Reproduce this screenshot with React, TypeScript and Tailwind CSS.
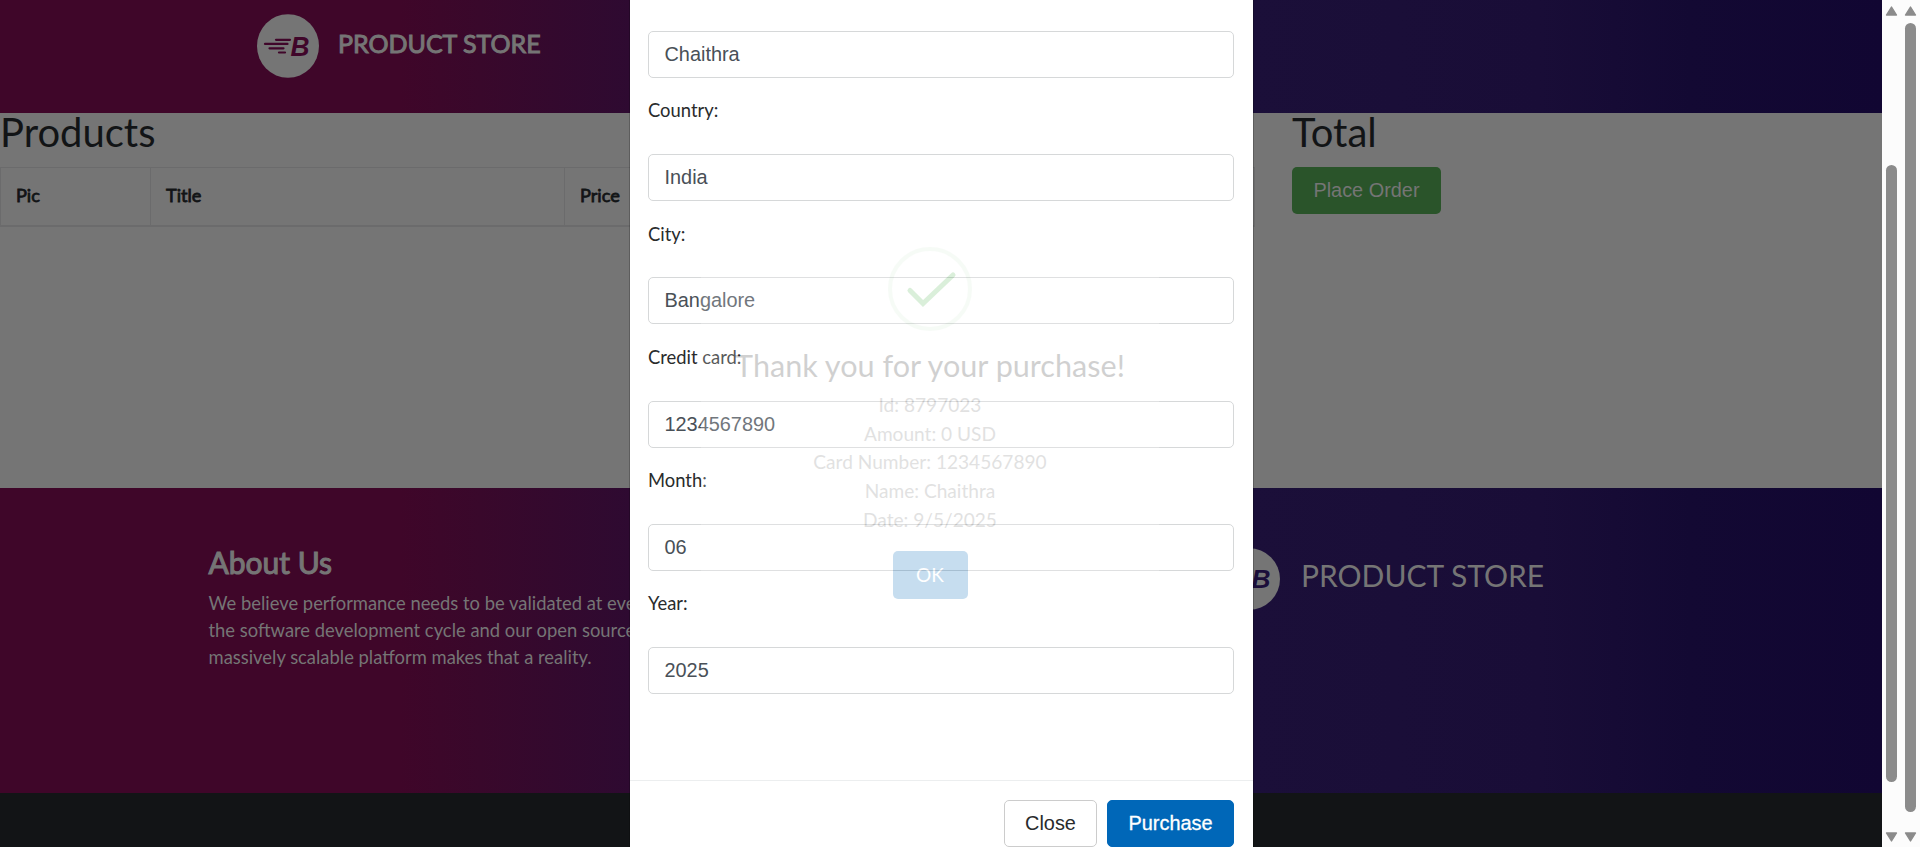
import React from "react";

const LATO = "font-['Lato','Liberation_Sans',sans-serif]";
const ARIAL = "font-['Liberation_Sans',Arial,sans-serif]";

const fields = [
  { label: "Country:", value: "India", box: "h-[76px] pt-[17px]" },
  { label: "City:", value: "Bangalore", box: "h-[76px] pt-[18px]" },
  { label: "Credit card:", value: "1234567890", box: "h-[77px] pt-[18px]" },
  { label: "Month:", value: "06", box: "h-[76px] pt-[17px]" },
  { label: "Year:", value: "2025", box: "h-[76px] pt-[17px]" },
];

const receipt = [
  "Id: 8797023",
  "Amount: 0 USD",
  "Card Number: 1234567890",
  "Name: Chaithra",
  "Date: 9/5/2025",
];

function Logo({ ink, className }: { ink: string; className: string }) {
  return (
    <svg viewBox="0 0 62 64" preserveAspectRatio="none" className={className}>
      <ellipse cx="31" cy="32" rx="31" ry="31.8" fill="#757575" />
      <g stroke={ink} strokeWidth="2.2" strokeLinecap="round">
        <path d="M19 25.8H33" />
        <path d="M8 29.9H30.5" />
        <path d="M12.5 34.3H26.5" />
        <path d="M22 38.5H28" />
      </g>
      <text x="33.5" y="41.8" fontSize="27" fontWeight="700" fontStyle="italic" fontFamily="Liberation Sans" fill={ink} textLength="19" lengthAdjust="spacingAndGlyphs">
        B
      </text>
    </svg>
  );
}

function TextField({ value }: { value: string }) {
  return (
    <div className={`${ARIAL} h-[47px] shrink-0 rounded-[5px] border border-[#d6d8d9] pl-[15.5px] text-[19.9px] leading-[45px] text-[#495057]`}>
      {value}
    </div>
  );
}

function Scrollbar({ thumb }: { thumb: string }) {
  return (
    <div className="flex h-full w-[19px] flex-col items-center justify-between bg-[#fcfcfc] pt-[6px] pb-[5px]">
      <svg width="13" height="10" viewBox="0 0 13 10" className="shrink-0">
        <path d="M6.5 1L11.5 9H1.5Z" fill="#8b8b8b" stroke="#8b8b8b" strokeWidth="1.4" strokeLinejoin="round" />
      </svg>
      <div className="flex w-[11px] flex-1 flex-col">
        <div className={`w-full rounded-full bg-[#8b8b8b] ${thumb}`} />
      </div>
      <svg width="13" height="10" viewBox="0 0 13 10" className="shrink-0">
        <path d="M6.5 9L11.5 1H1.5Z" fill="#8b8b8b" stroke="#8b8b8b" strokeWidth="1.4" strokeLinejoin="round" />
      </svg>
    </div>
  );
}

const GRADIENT =
  "bg-[linear-gradient(90deg,#3f0629_0px,#3f0629_400px,#39082b_480px,#2e0a31_630px,#1b0f39_1250px,#190d37_1540px,#130933_1690px,#110632_1882px)]";

function Page() {
  return (
    <div className="flex h-full w-[1882px] flex-col bg-[#757575]">
      <header className={`flex h-[113px] shrink-0 pl-[257px] pt-[14px] ${GRADIENT}`}>
        <Logo ink="#40062a" className="h-[64px] w-[62px]" />
        <span className="ml-[19px] mt-[14px] text-[25px] leading-[30px] [-webkit-text-stroke:1px_#757575] text-[#757575]">PRODUCT STORE</span>
      </header>
      <main className="flex h-[375px] shrink-0 text-[#121416]">
        <section className="w-[1255px]">
          <h2 className="h-[54px] text-[40px] leading-[39px]">Products</h2>
          <div className="flex h-[60px] border border-b-2 border-[#6b6b6c] text-[18.2px] leading-[55px] [-webkit-text-stroke:0.8px_#121416]">
            <div className="w-[149px] pl-[15px]">Pic</div>
            <div className="w-[414px] border-l border-[#6b6b6c] pl-[15px]">Title</div>
            <div className="border-l border-[#6b6b6c] pl-[15px]">Price</div>
          </div>
        </section>
        <section className="pl-[37px]">
          <h2 className="h-[54px] text-[40px] leading-[39px]">Total</h2>
          <div className={`${ARIAL} h-[47px] w-[149px] rounded-[5px] bg-[#2a542a] text-center text-[19.9px] leading-[46px] text-[#757575]`}>Place Order</div>
        </section>
      </main>
      <footer className={`flex h-[305px] shrink-0 pl-[208.5px] text-[#757575] ${GRADIENT}`}>
        <div className="w-[1009.5px] pt-[56px]">
          <h4 className="text-[30px] leading-[36px] [-webkit-text-stroke:1.1px_#757575]">About Us</h4>
          <p className="mt-[10px] text-[18.4px] leading-[27px]">
            We believe performance needs to be validated at every
            <br />
            the software development cycle and our open source
            <br />
            massively scalable platform makes that a reality.
          </p>
        </div>
        <Logo ink="#1b0e3a" className="mt-[60px] h-[62px] w-[62px]" />
        <span className="ml-[21px] mt-[69px] text-[30px] leading-[36px]">PRODUCT STORE</span>
      </footer>
      <div className="flex-1 bg-[#121416]" />
    </div>
  );
}

function OrderModal() {
  return (
    <div className="absolute left-[630px] top-0 flex h-[847px] w-[623px] flex-col bg-white pt-[31px] shadow-[0_0_0_1px_rgba(0,0,0,0.2)]">
      <div className="flex h-[749px] shrink-0 flex-col pl-[18px] pr-[19px]">
        <TextField value="Chaithra" />
        {fields.map((f) => (
          <React.Fragment key={f.label}>
            <div className={`shrink-0 text-[18.4px] leading-[30px] text-[#292b2c] ${f.box}`}>{f.label}</div>
            <TextField value={f.value} />
          </React.Fragment>
        ))}
      </div>
      <div className={`${ARIAL} flex justify-end border-t border-[#eceeef] pt-[19px] pr-[19px] text-[19.9px] leading-[45px]`}>
        <div className="mr-[10px] h-[47px] w-[93px] rounded-[5px] border border-[#ccc] text-center text-[#292b2c]">Close</div>
        <div className="h-[47px] w-[127px] rounded-[5px] border border-[#0067b8] bg-[#0067b8] text-center text-white [-webkit-text-stroke:0.3px_#fff]">Purchase</div>
      </div>
    </div>
  );
}

function ThankYou() {
  return (
    <div className="absolute left-[701px] top-[215px] flex h-[404px] w-[458px] flex-col items-center bg-white pt-[32px] opacity-[.22]">
      <svg width="84" height="84" viewBox="0 0 84 84" fill="none" className="shrink-0">
        <circle cx="42" cy="42" r="40" stroke="#4cae4c" strokeOpacity="0.2" strokeWidth="4" />
        <path d="M22 43.5L35 56.5L65 28" stroke="#5cb85c" strokeWidth="5" strokeLinecap="round" />
      </svg>
      <div className="mt-[17px] whitespace-nowrap text-[30.6px] leading-[36px] text-[#303030]">Thank you for your purchase!</div>
      <div className="mt-[7px] flex flex-col text-center text-[19.1px] leading-[28.7px] text-[#797979]">
        {receipt.map((line) => (
          <span key={line}>{line}</span>
        ))}
      </div>
      <div className="mt-[16px] h-[48px] w-[75px] rounded-[5px] bg-[#0067b8] text-center text-[19px] leading-[47px] text-white">OK</div>
    </div>
  );
}

export default function App() {
  return (
    <div className={`${LATO} relative flex h-[847px] w-[1920px] overflow-hidden`}>
      <Page />
      <Scrollbar thumb="mt-[149px] h-[617px]" />
      <Scrollbar thumb="mt-[7px] h-[789px]" />
      <OrderModal />
      <ThankYou />
    </div>
  );
}
